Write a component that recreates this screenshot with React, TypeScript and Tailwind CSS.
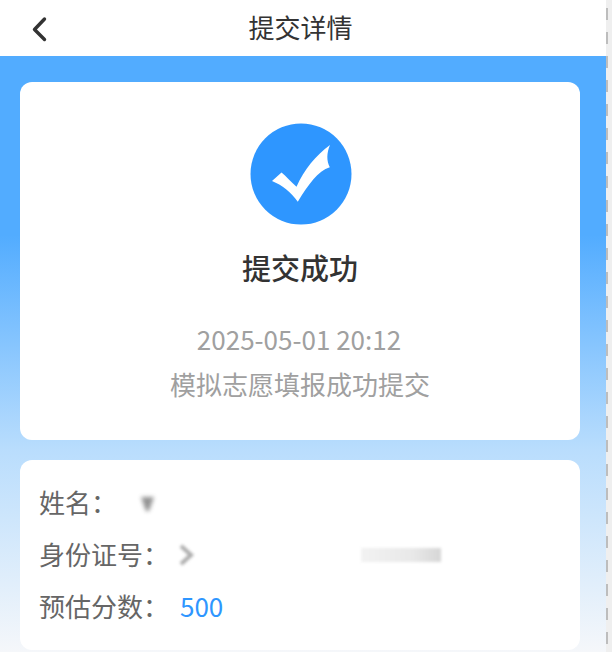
const font = "font-['Noto_Sans_CJK_SC','Noto_Sans',sans-serif]";

function CheckBadge() {
  return (
    <svg width="102" height="102" viewBox="0 0 102 102" className="block ml-px">
      <circle cx="51" cy="51" r="50.5" fill="#2e96ff" />
      <path
        d="M22 58 L31.5 49.5 C36 53 41 59 46.5 63.7 C54 47 66 32 80 22 C76.5 30 76.5 38 79.8 44.3 C68 48 58 62 47.8 78.7 C41 69 32 62 22 58 Z"
        fill="#ffffff"
      />
    </svg>
  );
}

export default function App() {
  return (
    <div className={`${font} flex w-[612px] h-[652px] overflow-hidden bg-white`}>
      <div className="flex flex-col w-[606px] h-full">
        {/* Header */}
        <header className="relative flex items-center justify-center h-[56px] shrink-0 bg-white">
          <svg
            width="18"
            height="26"
            viewBox="0 0 18 26"
            className="absolute left-[31px] top-[16px]"
            fill="none"
            stroke="#333333"
            strokeWidth="3.4"
            strokeLinecap="round"
            strokeLinejoin="round"
          >
            <path d="M13.5 3 L3.5 13.5 L13.5 23.5" />
          </svg>
          <h1 className="text-[26px] leading-none font-normal text-[#333333] -mt-[3px] -ml-[5px]">提交详情</h1>
        </header>

        {/* Content */}
        <main className="flex-1 flex flex-col gap-5 px-5 pt-[26px] bg-[linear-gradient(180deg,#52acff_0%,#52acff_30%,#b9ddfd_66%,#f5f7fa_100%)]">
          <section className="flex flex-col items-center h-[358px] rounded-xl bg-white pt-[41px] w-[560px]">
            <CheckBadge />
            <h2 className="mt-[24px] text-[29px] leading-[36px] font-medium text-[#333333]">提交成功</h2>
            <p className="mt-[36px] -ml-[2px] text-[26px] leading-[36px] text-[#a0a0a0]">2025-05-01 20:12</p>
            <p className="mt-[9px] text-[26px] leading-[36px] text-[#a0a0a0]">模拟志愿填报成功提交</p>
          </section>

          <section className="flex flex-col gap-[16px] h-[190px] rounded-xl bg-white w-[560px] pl-[19px] pr-5 pt-[23px]">
            <div className="flex items-center h-[36px] text-[26px] text-[#666666]">
              <span className="w-[99px] shrink-0">姓名：</span>
              <svg width="20" height="20" viewBox="0 0 20 20" className="shrink-0 mt-[6px] blur-[2px] opacity-80">
                <path d="M3 3 L16 3 L11 17 L8 17 Z" fill="#777777" />
              </svg>
            </div>
            <div className="flex items-center h-[36px] text-[26px] text-[#666666]">
              <span className="w-[141px] shrink-0">身份证号：</span>
              <svg width="14" height="22" viewBox="0 0 14 22" className="shrink-0 mt-[4px] blur-[1.5px] opacity-70">
                <path d="M1 2 L11 11 L1 20" fill="none" stroke="#8a8a8a" strokeWidth="4" />
              </svg>
              <div className="ml-[167px] mt-[4px] w-[80px] h-[14px] bg-[linear-gradient(90deg,#f2f2f2_0%,#e8e8e8_65%,#d6d6d6_100%)] blur-[1.5px]" />
            </div>
            <div className="flex items-center h-[36px] text-[26px] text-[#666666]">
              <span className="w-[141px] shrink-0">预估分数：</span>
              <span className="text-[#2e96ff]">500</span>
            </div>
          </section>
        </main>
      </div>

      {/* Dashed edge */}
      <div className="w-[6px] h-full shrink-0 bg-[#efefef] bg-[linear-gradient(180deg,#bdbdbd_0px,#bdbdbd_12px,transparent_12px,transparent_24px)] bg-[length:2px_24px] bg-[position:0px_8px] bg-repeat-y" />
    </div>
  );
}
